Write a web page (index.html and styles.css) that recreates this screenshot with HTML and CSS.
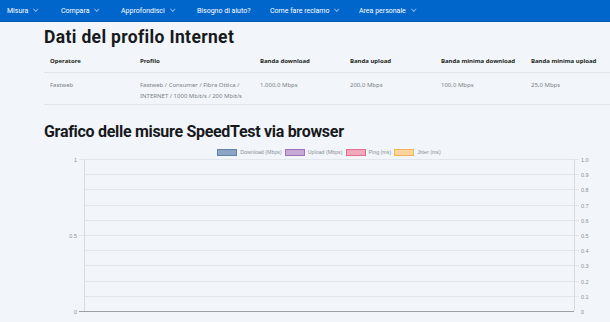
FILE: index.html
```html
<!DOCTYPE html>
<html lang="it">
<head>
    <meta charset="UTF-8">
    <title>Misura Internet</title>
    <link rel="stylesheet" href="styles.css">
</head>
<body>

<nav class="topnav">
    <div class="nav-item">Misura <span class="caret"></span></div>
    <div class="nav-item">Compara <span class="caret"></span></div>
    <div class="nav-item">Approfondisci <span class="caret"></span></div>
    <div class="nav-item">Bisogno di aiuto?</div>
    <div class="nav-item">Come fare reclamo <span class="caret"></span></div>
    <div class="nav-item">Area personale <span class="caret"></span></div>
</nav>

<main class="content">
    <h2 class="title">Dati del profilo Internet</h2>
    <div class="profile">
        <div class="row head">
            <div>Operatore</div>
            <div>Profilo</div>
            <div>Banda download</div>
            <div>Banda upload</div>
            <div>Banda minima download</div>
            <div>Banda minima upload</div>
        </div>
        <div class="row">
            <div>Fastweb</div>
            <div>Fastweb / Consumer / Fibra Ottica / INTERNET / 1000 Mbit/s / 200 Mbit/s</div>
            <div>1.000,0 Mbps</div>
            <div>200,0 Mbps</div>
            <div>100,0 Mbps</div>
            <div>25,0 Mbps</div>
        </div>
    </div>

    <h2 class="title chart-title">Grafico delle misure SpeedTest via browser</h2>
    <div class="chart">
        <div class="legend">
            <span class="key"><i class="box dl"></i>Download (Mbps)</span>
            <span class="key"><i class="box ul"></i>Upload (Mbps)</span>
            <span class="key"><i class="box ping"></i>Ping (ms)</span>
            <span class="key"><i class="box jit"></i>Jitter (ms)</span>
        </div>
        <svg class="plot" width="566" height="160" viewBox="0 0 566 160">
            <g id="grid" stroke="#e2e6ea" stroke-width="1"></g>
            <g id="labels" fill="#8a8f94" font-size="5.5" font-family="Liberation Sans, Arial, sans-serif"></g>
            <line x1="40.5" y1="2" x2="40.5" y2="154" stroke="#d8dce0"/>
            <line x1="530.5" y1="2" x2="530.5" y2="154" stroke="#d8dce0"/>
            <line x1="35" y1="154.5" x2="530" y2="154.5" stroke="#9aa0a6"/>
        </svg>
    </div>
</main>

<script>
    // griglia del grafico: 10 intervalli da 0 a 1
    let grid = document.getElementById('grid');
    let labels = document.getElementById('labels');
    let top0 = 2, step = 15.2;
    for(let i = 0; i <= 10; i++){
        let y = Math.round(top0 + step * i) + 0.5;
        if(i < 10){
            grid.innerHTML += `<line x1="40" y1="${y}" x2="535" y2="${y}"/>`;
        }
        let v = (10 - i) / 10;
        let right = v === 0 ? '0' : v.toFixed(1);
        labels.innerHTML += `<text x="537" y="${y + 2}">${right}</text>`;
    }
    grid.innerHTML += `<line x1="35" y1="2.5" x2="40" y2="2.5"/><line x1="35" y1="78.5" x2="40" y2="78.5"/>`;
    labels.innerHTML += `<text x="33" y="4.5" text-anchor="end">1</text>`;
    labels.innerHTML += `<text x="33" y="80.5" text-anchor="end">0.5</text>`;
    labels.innerHTML += `<text x="33" y="156.5" text-anchor="end">0</text>`;
</script>

</body>
</html>
```

FILE: styles.css
```css
html,body{
    height: 100%;
}
body{
    margin: 0;
    background: #f2f6fa;
    font-family: "Noto Sans", "Open Sans", sans-serif;
    color: #1a1a1a;
    overflow: hidden;
}

.topnav{
    height: 21px;
    background: #0066cc;
    display: flex;
    align-items: center;
    padding-left: 7px;
    box-shadow: 0 1px 0 #0a58a8;
}

.nav-item{
    color: #fff;
    font-family: "Liberation Sans Narrow", "Roboto", sans-serif;
    font-size: 7px;
    display: flex;
    align-items: center;
    white-space: nowrap;
}
.nav-item:nth-child(1){ width: 54px; }
.nav-item:nth-child(2){ width: 60px; }
.nav-item:nth-child(3){ width: 76px; }
.nav-item:nth-child(4){ width: 73px; }
.nav-item:nth-child(5){ width: 89px; }

.caret{
    width: 2.5px;
    height: 2.5px;
    border-right: 1px solid #8fb8e6;
    border-bottom: 1px solid #8fb8e6;
    transform: rotate(45deg);
    margin-left: 6px;
    margin-top: -3px;
}

.content{
    padding-left: 44px;
}

.title{
    margin: 0;
    font-family: "Roboto", "Noto Sans", sans-serif;
    font-weight: 700;
    font-size: 17.5px;
    letter-spacing: 0.35px;
    line-height: 20px;
    padding-top: 6px;
    color: #17191c;
}

.profile{
    width: 566px;
    margin-top: 2px;
    font-size: 6px;
}

.row{
    display: grid;
    grid-template-columns: 90px 120px 90px 91px 90px 1fr;
    padding: 0 6px;
    border-bottom: 1px solid #e0e5ea;
}
.row div{
    padding-right: 8px;
}
.row.head div{
    white-space: nowrap;
}
.row.head{
    height: 23px;
    align-items: center;
    font-weight: 700;
    color: #1d1f22;
}
.row:not(.head){
    padding-top: 7px;
    height: 24px;
    line-height: 11px;
    color: #7a7f85;
}

.chart-title{
    padding-top: 17px;
    font-size: 16px;
    letter-spacing: -0.3px;
}

.chart{
    width: 566px;
    margin-top: 6px;
}

.legend{
    display: flex;
    justify-content: center;
    gap: 3px;
    height: 8px;
    align-items: center;
    font-family: "Liberation Sans", Arial, sans-serif;
    font-size: 5.3px;
    color: #8a8f94;
    padding-left: 4px;
}
.key{
    display: flex;
    align-items: center;
}
.box{
    width: 18px;
    height: 5px;
    margin-right: 3px;
    border: 1px solid;
}
.box.dl{ background: #8ba6c4; border-color: #5d84ad; }
.box.ul{ background: #c6a9d5; border-color: #9d74b7; }
.box.ping{ background: #f2a7bb; border-color: #e06f8e; }
.box.jit{ background: #fcd49d; border-color: #f3b25c; }

.plot{
    display: block;
    margin-top: 1px;
}
```
